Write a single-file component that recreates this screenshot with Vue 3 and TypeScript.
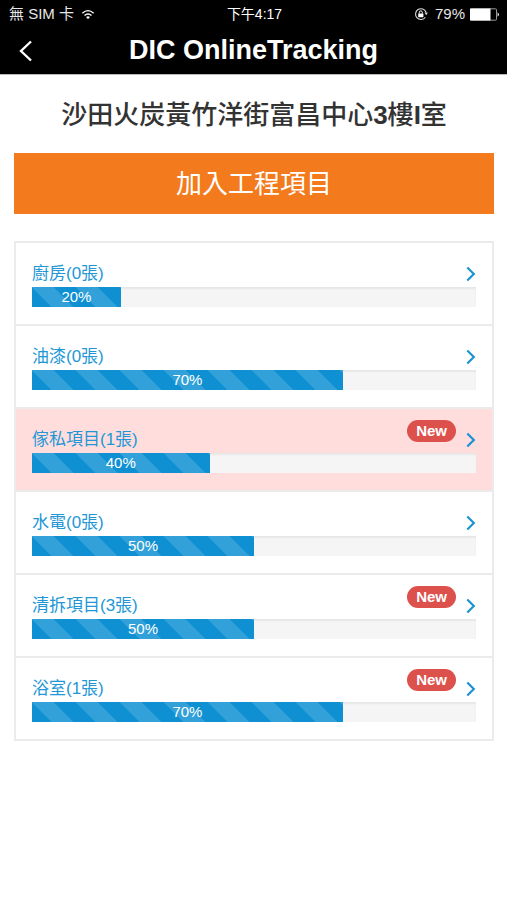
<script setup lang="ts">
interface Project {
  name: string
  photos: number
  progress: number
  isNew: boolean
}

const projects: Project[] = [
  { name: '廚房', photos: 0, progress: 20, isNew: false },
  { name: '油漆', photos: 0, progress: 70, isNew: false },
  { name: '傢私項目', photos: 1, progress: 40, isNew: true },
  { name: '水電', photos: 0, progress: 50, isNew: false },
  { name: '清拆項目', photos: 3, progress: 50, isNew: true },
  { name: '浴室', photos: 1, progress: 70, isNew: true },
]

const highlighted = '傢私項目'
</script>

<template>
  <div class="app">
    <header class="top">
      <div class="status">
        <div class="carrier">
          <span>無 SIM 卡</span>
          <svg width="14" height="11" viewBox="0 0 16 12" aria-hidden="true">
            <path d="M1.5 4.6Q8-1.4 14.5 4.6" fill="none" stroke="#fff" stroke-width="1.5" />
            <path d="M4 7.2Q8 3.6 12 7.2" fill="none" stroke="#fff" stroke-width="1.6" />
            <path d="M5.8 8.9Q8 7 10.2 8.9L8 11.4Z" fill="#fff" />
          </svg>
        </div>
        <div class="time">下午4:17</div>
        <div class="power">
          <svg width="14" height="14" viewBox="0 0 14 14" aria-hidden="true">
            <path d="M11.4 10.2A5.4 5.4 0 1 1 12 5.2" fill="none" stroke="#ddd" stroke-width="1.1" />
            <path d="M10.4 5.6h3.4l-1.5 2.6z" fill="#ddd" />
            <rect x="4.2" y="6.4" width="5.2" height="3.8" rx=".4" fill="#fff" />
            <path d="M5.3 6.6V5.4a1.5 1.5 0 0 1 3 0v1.2" fill="none" stroke="#fff" stroke-width="1" />
          </svg>
          <span class="percent">79%</span>
          <svg width="30" height="13" viewBox="0 0 30 13" aria-hidden="true">
            <rect x=".5" y=".8" width="26" height="11.4" rx="1" fill="none" stroke="#999" stroke-width="1" />
            <rect x="0" y=".5" width="20.5" height="12" fill="#fff" />
            <path d="M27.6 4.2q2.6 2.3 0 4.6z" fill="#fff" />
          </svg>
        </div>
      </div>
      <div class="nav">
        <button class="back" type="button" aria-label="返回">
          <svg width="14" height="22" viewBox="0 0 14 22" aria-hidden="true">
            <path d="M12 1.5 2 11l10 9.5" fill="none" stroke="#fff" stroke-width="2.4" />
          </svg>
        </button>
        <h1 class="title">DIC OnlineTracking</h1>
      </div>
    </header>

    <main class="content">
      <h2 class="address">沙田火炭黃竹洋街富昌中心<b>3</b>樓<b>I</b>室</h2>
      <button class="add" type="button">加入工程項目</button>

      <ul class="list">
        <li
          v-for="p in projects"
          :key="p.name"
          class="item"
          :class="{ active: p.name === highlighted }"
        >
          <a class="link" href="#">
            <span class="head">
              <span>{{ p.name }}({{ p.photos }}張)</span>
              <span v-if="p.isNew" class="badge">New</span>
              <svg class="chevron" width="10" height="16" viewBox="0 0 10 16" aria-hidden="true">
                <path d="M1.3 1.5 7.8 8l-6.5 6.5" fill="none" stroke="#1b93d3" stroke-width="2.2" />
              </svg>
            </span>
            <span class="track">
              <span class="bar" :style="{ width: p.progress + '%' }">{{ p.progress }}%</span>
            </span>
          </a>
        </li>
      </ul>
    </main>
  </div>
</template>

<style>
body {
  background: #fff;
}
</style>

<style scoped>
.app {
  font-family: 'Liberation Sans', 'Noto Sans CJK TC', sans-serif;
  color: #333;
}

.top {
  background: #000;
  color: #fff;
  border-bottom: 1px solid #b8b8b8;
}

.status {
  display: grid;
  grid-template-columns: 1fr auto 1fr;
  align-items: center;
  height: 28px;
  padding: 0 7px 0 9px;
  font-size: 15px;
  line-height: 20px;
  color: #e8e8e8;
}

.carrier,
.power {
  display: flex;
  align-items: center;
  gap: 7px;
}

.power {
  justify-content: flex-end;
}

.percent {
  margin-right: -2px;
}

.time {
  font-size: 14px;
  color: #fff;
}

.nav {
  display: grid;
  grid-template-columns: 40px 1fr 40px;
  align-items: center;
  height: 46px;
  padding: 0 6px;
}

.back {
  display: flex;
  justify-content: center;
  align-items: center;
  height: 40px;
  padding: 0;
  border: 0;
  background: none;
}

.title {
  margin: 0;
  padding-bottom: 2px;
  font-size: 27px;
  line-height: 40px;
  font-weight: bold;
  text-align: center;
}

.content {
  padding: 20px 13px 0 14px;
}

.address {
  margin: 0 0 18px;
  font-size: 26px;
  line-height: 40px;
  font-weight: 500;
  text-align: center;
}

.add {
  display: block;
  width: 100%;
  height: 61px;
  margin-bottom: 27px;
  padding: 0;
  border: 0;
  background: #f37b1d;
  color: #fff;
  font-family: inherit;
  font-size: 26px;
  line-height: 40px;
}

.list {
  margin: 0;
  padding: 0;
  list-style: none;
  border: 2px solid #ebebeb;
  border-top: 0;
}

.item {
  border-top: 2px solid #ebebeb;
}

.active {
  background: #fdd;
}

.link {
  display: flex;
  flex-direction: column;
  gap: 1px;
  padding: 19px 16px 17px;
  color: #2397d6;
  text-decoration: none;
}

.head {
  position: relative;
  display: flex;
  justify-content: space-between;
  align-items: center;
  height: 24px;
  font-size: 17px;
  line-height: 24px;
}

.badge {
  position: absolute;
  top: -8px;
  right: 20px;
  padding: 0 9px;
  border-radius: 11px;
  background: #dd514c;
  color: #fff;
  font-size: 15px;
  line-height: 22px;
  font-weight: bold;
}

.track {
  display: block;
  height: 20px;
  background: #f5f5f5;
  box-shadow: inset 0 2px 2px rgba(0, 0, 0, 0.06);
}

.bar {
  display: block;
  height: 20px;
  background-color: #0e90d2;
  background-image: linear-gradient(
    45deg,
    rgba(255, 255, 255, 0.15) 25%,
    transparent 25%,
    transparent 50%,
    rgba(255, 255, 255, 0.15) 50%,
    rgba(255, 255, 255, 0.15) 75%,
    transparent 75%
  );
  background-size: 44px 44px;
  color: #fff;
  font-size: 15px;
  line-height: 20px;
  text-align: center;
}
</style>
